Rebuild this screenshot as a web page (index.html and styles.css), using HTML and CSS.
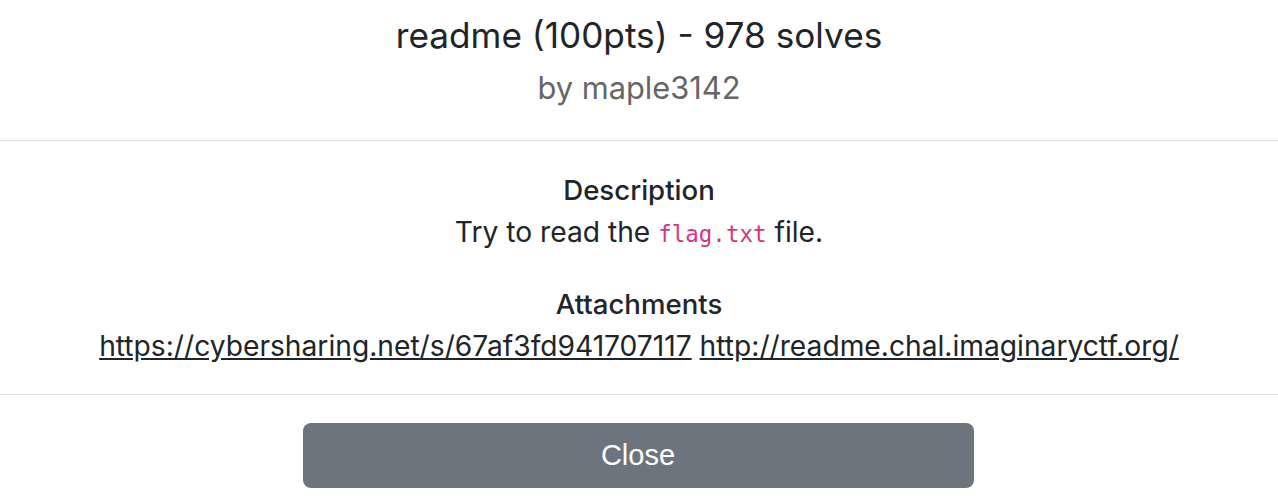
FILE: index.html
```html
<!DOCTYPE html>
<html>
<head>
<meta charset="utf-8">
<link rel="stylesheet" href="styles.css">
</head>
<body>
<div class="modal">
  <header class="modal-header">
    <h1 class="title">readme (100pts) - 978 solves</h1>
    <p class="author">by maple3142</p>
  </header>
  <section class="modal-body">
    <h2 class="heading">Description</h2>
    <p class="text">Try to read the <code class="code">flag.txt</code> file.</p>
    <h2 class="heading">Attachments</h2>
    <p class="text"><a class="link" href="#">https://cybersharing.net/s/67af3fd941707117</a> <a class="link" href="#">http://readme.chal.imaginaryctf.org/</a></p>
  </section>
  <footer class="modal-footer">
    <button class="btn-close">Close</button>
  </footer>
</div>
</body>
</html>
```
FILE: styles.css
```css
html, body {
  margin: 0;
  padding: 0;
  background: #fff;
}
body {
  font-family: Inter, "Noto Sans", sans-serif;
  color: #212529;
}
.modal {
  width: 1278px;
  height: 504px;
  overflow: hidden;
}
.modal-header {
  height: 141px;
  border-bottom: 1px solid #dee2e6;
  display: flex;
  flex-direction: column;
  align-items: center;
  padding-top: 14px;
  box-sizing: border-box;
}
.title {
  margin: 0;
  font-size: 35.2px;
  font-weight: 400;
  line-height: 42px;
}
.author {
  margin: 12px 0 0;
  font-size: 30.8px;
  line-height: 40px;
  color: #666666;
}
.modal-body {
  height: 254px;
  border-bottom: 1px solid #dee2e6;
  text-align: center;
  padding-top: 29px;
  box-sizing: border-box;
}
.heading {
  margin: 0;
  font-size: 27.6px;
  font-weight: 500;
  line-height: 40px;
}
.text {
  margin: 2px 0 30px;
  font-size: 28.2px;
  line-height: 40px;
}
.code {
  font-family: "DejaVu Sans Mono", monospace;
  font-size: 22.5px;
  color: #d63384;
}
.link {
  color: #212529;
  text-decoration: underline;
}
.modal-footer {
  display: flex;
  justify-content: center;
  padding: 28px 2px 0 0;
}
.btn-close {
  width: 671px;
  height: 65px;
  border: 0;
  border-radius: 8px;
  background: #6c757d;
  color: #fff;
  font-family: "Liberation Sans", Arial, sans-serif;
  font-size: 29px;
}
```
